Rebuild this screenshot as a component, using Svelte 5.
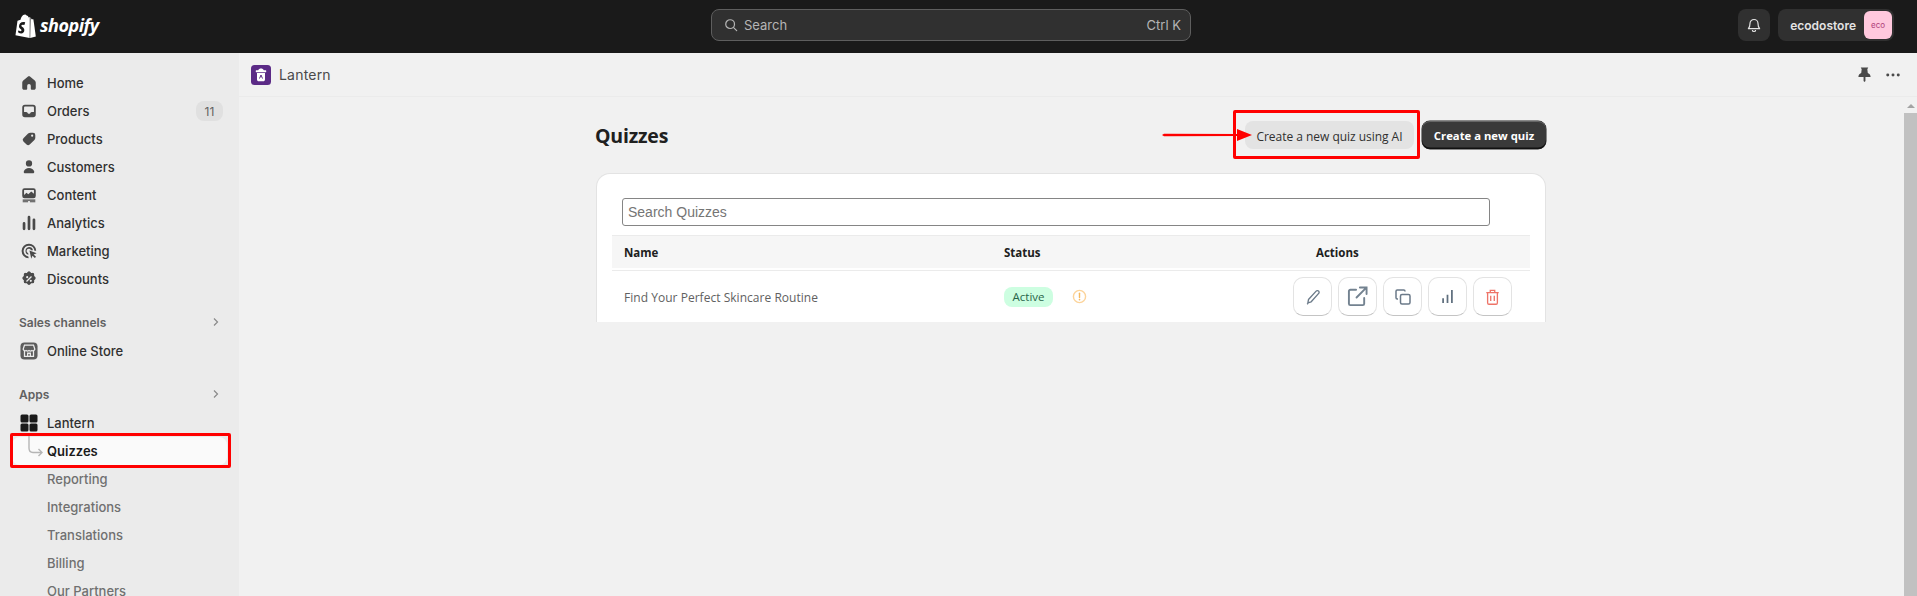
<script>
  const mainNav = [
    { label: 'Home', d: 'M10 2.5c-.5 0-1 .2-1.4.5L3.6 7.2c-.7.6-1.1 1.4-1.1 2.3v6c0 1.1.9 2 2 2h2.5c.6 0 1-.4 1-1V13a2 2 0 0 1 4 0v3.5c0 .6.4 1 1 1h2.5c1.1 0 2-.9 2-2v-6c0-.9-.4-1.7-1.1-2.3L11.4 3c-.4-.3-.9-.5-1.4-.5z' },
    { label: 'Orders', badge: '11', d: 'M5.5 3a3 3 0 0 0-3 3v8a3 3 0 0 0 3 3h9a3 3 0 0 0 3-3V6a3 3 0 0 0-3-3h-9zm0 2h9c.6 0 1 .4 1 1v5h-2.300c-.7 0-1.300.4-1.600 1l-.2.4c-.1.3-.4.6-.8.6H9.400c-.4 0-.7-.3-.8-.6l-.2-.4c-.3-.6-.9-1-1.600-1H4.500V6c0-.6.4-1 1-1z' },
    { label: 'Products', d: 'M11.5 3h3A2.5 2.5 0 0 1 17 5.5v3c0 .9-.4 1.8-1 2.5l-5.2 5.2a2.5 2.5 0 0 1-3.5 0l-3.5-3.5a2.5 2.5 0 0 1 0-3.5L9 4c.7-.6 1.6-1 2.5-1zm2 4.5a1.2 1.2 0 1 0 0-2.4 1.2 1.2 0 0 0 0 2.4z' },
    { label: 'Customers', d: 'M10 2.5a3.5 3.5 0 1 1 0 7 3.5 3.5 0 0 1 0-7zM4.200 15c.8-2.4 3-3.8 5.8-3.8s5 1.400 5.800 3.800c.3 1-.4 2-1.500 2H5.700c-1.100 0-1.800-1-1.500-2z' },
    { label: 'Content', d: 'M5 2.5h10A2.5 2.5 0 0 1 17.5 5v6a2.5 2.5 0 0 1-2.5 2.5H5A2.5 2.5 0 0 1 2.5 11V5A2.5 2.5 0 0 1 5 2.5zm0 2c-.3 0-.5.2-.5.5v5l2.7-2.5 2 1.800 3.300-3.300 3 2.500V5c0-.3-.2-.5-.5-.5H5zM3 15h14v1.500H3zM3 17h6v1H3zm8 0h6v1h-6z' },
    { label: 'Analytics', d: 'M8.5 3.5a1.5 1.5 0 0 1 3 0v13a1.5 1.5 0 0 1-3 0zM14 6.5a1.5 1.5 0 0 1 3 0v10a1.5 1.5 0 0 1-3 0zM3 10.5a1.5 1.5 0 0 1 3 0v6a1.5 1.5 0 0 1-3 0z' },
    { label: 'Marketing', d: 'M10 2a8 8 0 0 1 8 7.7h-2A6 6 0 1 0 9.3 16l.3 2A8 8 0 0 1 10 2zm0 3.5a4.5 4.5 0 0 1 4.4 3.600h-2.200A2.500 2.500 0 1 0 9 12.300l.4 2A4.500 4.500 0 0 1 10 5.500zM10.500 9.500l8 3-3.300 1.300 2.600 2.700-1.300 1.300-2.700-2.600-1.300 3.300z' },
    { label: 'Discounts', d: 'M8.5 2.3a2 2 0 0 1 3 0l.9 1 1.3-.1a2 2 0 0 1 2.1 2.1l-.1 1.300 1 .9a2 2 0 0 1 0 3l-1 .9.1 1.300a2 2 0 0 1-2.100 2.100l-1.300-.1-.9 1a2 2 0 0 1-3 0l-.9-1-1.300.1a2 2 0 0 1-2.100-2.100l.1-1.300-1-.9a2 2 0 0 1 0-3l1-.9-.1-1.300a2 2 0 0 1 2.100-2.100l1.300.1zM12.300 6.700l-5.600 5.600 1 1 5.600-5.600zM8 6.800a1.200 1.200 0 1 0 0 2.400 1.200 1.200 0 0 0 0-2.400zm4 4a1.200 1.200 0 1 0 0 2.400 1.200 1.200 0 0 0 0-2.400z' }
  ];
  const subNav = ['Reporting', 'Integrations', 'Translations', 'Billing', 'Our Partners'];
</script>

<div class="page">
  <header class="topbar">
    <div class="brand">
      <svg class="bag" viewBox="0 0 22 25" width="21" height="24" aria-hidden="true">
        <path fill="#fff" d="M15.5 3.2 14.3 3.6C13.9 2.5 13.3 1.6 12.2 1.6 11.7.8 11.1.5 10.5.5 7.6.5 6.2 4.100 5.800 6L3.400 6.700C2.700 6.900 2.600 7 2.500 7.700L.5 22.200 15.400 25z"/>
        <path fill="#fff" d="M16.300 3.200 15.900 25l6-1.400S19.400 6 19.300 5.800c0-.2-.2-.3-.4-.3l-1.600-.1z"/>
        <path fill="#1a1a1a" d="M10.600 9.200 9.800 11.500s-.8-.4-1.700-.4c-1.400 0-1.400.9-1.400 1.100 0 1.200 3.100 1.700 3.100 4.500 0 2.200-1.400 3.600-3.300 3.600-2.300 0-3.400-1.400-3.400-1.400l.6-2s1.200 1 2.200 1c.7 0 .9-.5.9-.9 0-1.600-2.600-1.700-2.600-4.300 0-2.200 1.600-4.400 4.800-4.400 1.200 0 1.600.4 1.600.4z"/>
      </svg>
      <span class="wordmark">shopify</span>
    </div>
    <div class="search">
      <svg viewBox="0 0 16 16" width="14" height="14" aria-hidden="true"><circle cx="7" cy="7" r="5" fill="none" stroke="#b5b5b5" stroke-width="1.4"/><path d="m11 11 3.5 3.5" stroke="#b5b5b5" stroke-width="1.4" stroke-linecap="round"/></svg>
      <span class="search-label">Search</span>
      <span class="shortcut">Ctrl K</span>
    </div>
    <div class="account">
      <button class="bell" aria-label="Notifications">
        <svg viewBox="0 0 20 20" width="16" height="17" aria-hidden="true"><path fill="none" stroke="#e3e3e3" stroke-width="1.5" stroke-linejoin="round" d="M10 2.5a5 5 0 0 0-5 5c0 3.5-.8 5-2 6.500h14c-1.200-1.500-2-3-2-6.500a5 5 0 0 0-5-5z"/><path fill="none" stroke="#e3e3e3" stroke-width="1.5" d="M8 15.500a2 2 0 0 0 4 0"/></svg>
      </button>
      <div class="store">
        <span>ecodostore</span>
        <span class="avatar">eco</span>
      </div>
    </div>
  </header>

  <div class="body">
    <nav class="sidebar">
      <ul>
        {#each mainNav as item}
          <li class="row">
            <svg class="icon" viewBox="0 0 20 20" width="18" height="18" aria-hidden="true"><path fill="#4a4a4a" fill-rule="evenodd" d={item.d}/></svg>
            <span class="label">{item.label}</span>
            {#if item.badge}<span class="count">{item.badge}</span>{/if}
          </li>
        {/each}
      </ul>

      <div class="section">
        <span>Sales channels</span>
        <svg viewBox="0 0 10 10" width="10" height="10" aria-hidden="true"><path d="m3 1.5 3.5 3.5L3 8.5" fill="none" stroke="#8a8a8a" stroke-width="1.2"/></svg>
      </div>
      <div class="row">
        <svg class="icon" viewBox="0 0 20 20" width="18" height="18" aria-hidden="true">
          <rect x="0.5" y="0.5" width="19" height="19" rx="4.5" fill="#5c5c5c"/>
          <path fill="none" stroke="#ebebeb" stroke-width="1.4" d="M5 3.5h10l1.500 4.500a2.200 2.200 0 0 1-3.200 1.500 2.700 2.700 0 0 1-3.300 0 2.700 2.700 0 0 1-3.300 0A2.200 2.200 0 0 1 3.500 8zM5 10v6h10v-6M8.500 16v-3.500h3V16"/>
        </svg>
        <span class="label">Online Store</span>
      </div>

      <div class="section">
        <span>Apps</span>
        <svg viewBox="0 0 10 10" width="10" height="10" aria-hidden="true"><path d="m3 1.5 3.5 3.5L3 8.5" fill="none" stroke="#8a8a8a" stroke-width="1.2"/></svg>
      </div>
      <div class="row">
        <svg class="icon" viewBox="0 0 18 18" width="18" height="18" aria-hidden="true">
          <rect x="0.5" y="0.5" width="8" height="8" rx="1.5" fill="#1a1a1a"/>
          <rect x="9.5" y="0.5" width="8" height="8" rx="1.5" fill="#1a1a1a"/>
          <rect x="0.5" y="9.5" width="8" height="8" rx="1.5" fill="#1a1a1a"/>
          <rect x="9.5" y="9.5" width="8" height="8" rx="1.5" fill="#1a1a1a"/>
        </svg>
        <span class="label">Lantern</span>
      </div>
      <div class="row sub current">
        <svg class="elbow" viewBox="0 0 16 26" width="16" height="26" aria-hidden="true"><path d="M1 0v14c0 3 1.5 4.5 4 4.5h9M10.5 15l3.5 3.500-3.500 3.500" fill="none" stroke="#b5b5b5" stroke-width="1.4"/></svg>
        <span class="label">Quizzes</span>
      </div>
      {#each subNav as item}
        <div class="row sub"><span class="label">{item}</span></div>
      {/each}
      <div class="mark nav-mark"></div>
    </nav>

    <main class="content">
      <div class="appbar">
        <svg class="app-logo" viewBox="0 0 20 20" width="20" height="20" aria-hidden="true">
          <rect width="20" height="20" rx="3.5" fill="#5b2a86"/>
          <path fill="#fff" d="M10 3.5c1.3 0 2.3.7 2.8 1.700h1.700c.5 0 .8.5.8 1s-.3 1-.8 1h-9c-.5 0-.8-.5-.8-1s.3-1 .8-1h1.700C7.700 4.200 8.700 3.500 10 3.500zM6 8h8v6.500c0 1-.8 1.800-1.800 1.800H7.800c-1 0-1.800-.8-1.800-1.800z"/>
          <path fill="none" stroke="#5b2a86" stroke-width="1" d="M8.500 13.500 10 10l1.500 3.500"/>
        </svg>
        <span class="app-name">Lantern</span>
        <div class="app-tools">
          <svg viewBox="0 0 16 16" width="15" height="15" aria-hidden="true"><path fill="#4a4a4a" d="M4 .5h8l-1 2 .5 4c2 .8 3 2.300 3 4.200H9V15l-1 1-1-1v-4.300H1.500c0-1.900 1-3.400 3-4.200l.5-4z"/></svg>
          <svg viewBox="0 0 16 4" width="14" height="4" aria-hidden="true"><circle cx="2" cy="2" r="1.7" fill="#4a4a4a"/><circle cx="8" cy="2" r="1.7" fill="#4a4a4a"/><circle cx="14" cy="2" r="1.7" fill="#4a4a4a"/></svg>
        </div>
      </div>

      <div class="scroller">
        <div class="wrap">
          <div class="head">
            <h1>Quizzes</h1>
            <div class="head-actions">
              <button class="btn plain">Create a new quiz using AI</button>
              <button class="btn dark">Create a new quiz</button>
            </div>
          </div>

          <section class="card">
            <input class="filter" placeholder="Search Quizzes" />
            <div class="grid thead">
              <div>Name</div>
              <div>Status</div>
              <div class="actions-title">Actions</div>
            </div>
            <div class="grid tbody">
              <div class="quiz-name">Find Your Perfect Skincare Routine</div>
              <div class="status">
                <span class="pill">Active</span>
                <svg viewBox="0 0 16 16" width="15" height="15" aria-hidden="true"><circle cx="8" cy="8" r="6.5" fill="none" stroke="#fcd49b" stroke-width="1.5"/><path d="M8 4.500V9" stroke="#f5b95f" stroke-width="1.5" stroke-linecap="round"/><circle cx="8" cy="11.3" r=".9" fill="#f5b95f"/></svg>
              </div>
              <div class="tools">
                <button class="tool" aria-label="Edit">
                  <svg viewBox="0 0 20 20" width="18" height="18" aria-hidden="true"><path fill="none" stroke="#6b7a89" stroke-width="1.5" stroke-linejoin="round" d="M13.5 3.5a1.800 1.800 0 0 1 2.800 2.500L8 15.300 4.300 16.500 5 12.800zM3.500 18l1-1"/></svg>
                </button>
                <button class="tool" aria-label="Open">
                  <svg viewBox="0 0 22 22" width="21" height="21" aria-hidden="true"><path fill="none" stroke="#738290" stroke-width="2" stroke-linecap="round" d="M9.5 4h-6A1.5 1.5 0 0 0 2 5.500v13A1.500 1.500 0 0 0 3.500 20h13a1.500 1.500 0 0 0 1.500-1.500v-6M10 12 20 2M13.500 1.500h7v7"/></svg>
                </button>
                <button class="tool" aria-label="Duplicate">
                  <svg viewBox="0 0 16 16" width="16" height="16" aria-hidden="true"><rect x="5.5" y="5.5" width="9.5" height="9.5" rx="1.5" fill="none" stroke="#6b7a89" stroke-width="1.5"/><path fill="none" stroke="#6b7a89" stroke-width="1.5" d="M10 2.500v-.3A1.200 1.200 0 0 0 8.800 1H2.200A1.200 1.200 0 0 0 1 2.200v6.600A1.200 1.200 0 0 0 2.200 10H3"/></svg>
                </button>
                <button class="tool" aria-label="Reports">
                  <svg viewBox="0 0 12 14" width="11" height="13" aria-hidden="true"><path d="M1.2 14V9M6 14V5M10.8 14V0" stroke="#5f6f7e" stroke-width="1.9"/></svg>
                </button>
                <button class="tool" aria-label="Delete">
                  <svg viewBox="0 0 16 18" width="15" height="16" aria-hidden="true"><path fill="none" stroke="#ee7468" stroke-width="1.5" d="M1 4h14M5.500 4V1.500h5V4M2.500 4v11.500c0 1 .7 1.700 1.500 1.700h8c.8 0 1.500-.7 1.500-1.700V4M6 7.500v6M10 7.500v6"/></svg>
                </button>
              </div>
            </div>
          </section>
        </div>
        <div class="scrollbar">
          <span class="up"></span>
          <span class="thumb"></span>
        </div>
      </div>

      <div class="mark ai-mark"></div>
      <svg class="pointer" viewBox="0 0 90 14" width="90" height="14" aria-hidden="true"><path d="M0 7 2 5.800 78 6v2L2 8.200z" fill="#f00"/><path d="M75 1l15 6-15 6z" fill="#f00"/></svg>
    </main>
  </div>
</div>

<style>
  :global(body) {
    background: #f1f1f1;
    overflow: hidden;
  }
  .page {
    height: 596px;
    display: flex;
    flex-direction: column;
    overflow: hidden;
    font-family: Inter, "Noto Sans", sans-serif;
    font-size: 13px;
    color: #303030;
  }
  button {
    font: inherit;
    cursor: pointer;
  }

  .topbar {
    flex: none;
    height: 53px;
    box-sizing: border-box;
    padding-bottom: 3px;
    background: #1a1a1a;
    display: grid;
    grid-template-columns: 711px 480px 1fr;
    align-items: center;
  }
  .brand {
    display: flex;
    align-items: center;
    gap: 4px;
    padding-left: 15px;
  }
  .bag {
    position: relative;
    top: 1px;
  }
  .wordmark {
    font-family: "Open Sans", sans-serif;
    font-style: italic;
    font-weight: 700;
    font-size: 18px;
    letter-spacing: -0.5px;
    color: #fff;
  }
  .search {
    height: 32px;
    box-sizing: border-box;
    border: 1px solid #5e5e5e;
    border-radius: 8px;
    background: #303030;
    display: flex;
    align-items: center;
    padding: 0 9px 0 12px;
    color: #b5b5b5;
  }
  .search-label {
    margin-left: 6px;
  }
  .shortcut {
    margin-left: auto;
  }
  .account {
    display: flex;
    justify-content: flex-end;
    align-items: center;
    gap: 8px;
    padding-right: 23px;
  }
  .bell {
    width: 32px;
    height: 32px;
    border: none;
    border-radius: 8px;
    background: #303030;
    display: flex;
    align-items: center;
    justify-content: center;
    padding: 0;
  }
  .store {
    height: 32px;
    border-radius: 8px;
    background: #303030;
    color: #e3e3e3;
    font-weight: 600;
    font-size: 12px;
    display: flex;
    align-items: center;
    gap: 8px;
    padding: 0 2px 0 12px;
  }
  .avatar {
    width: 28px;
    height: 28px;
    border-radius: 6px;
    background: #ffc8dd;
    color: #b0417a;
    font-size: 8px;
    font-weight: 400;
    display: flex;
    align-items: center;
    justify-content: center;
  }

  .body {
    flex: 1;
    min-height: 0;
    display: flex;
  }
  .sidebar {
    flex: none;
    width: 239px;
    box-sizing: border-box;
    background: #ebebeb;
    padding: 16px 0 0 12px;
    position: relative;
  }
  ul {
    list-style: none;
    margin: 0;
    padding: 0;
  }
  .row {
    height: 28px;
    width: 215px;
    box-sizing: border-box;
    display: flex;
    align-items: center;
    padding: 0 11px 0 8px;
    border-radius: 8px;
    position: relative;
  }
  .icon {
    flex: none;
    margin-right: 9px;
  }
  .label {
    font-weight: 500;
  }
  .count {
    margin-left: auto;
    margin-right: -7px;
    width: 27px;
    height: 20px;
    border-radius: 8px;
    background: #e0e0e0;
    color: #616161;
    font-size: 12px;
    display: flex;
    align-items: center;
    justify-content: center;
  }
  .section {
    height: 30px;
    width: 215px;
    margin-top: 14px;
    box-sizing: border-box;
    display: flex;
    align-items: center;
    justify-content: space-between;
    padding: 0 6px 0 7px;
    color: #616161;
    font-size: 12px;
    font-weight: 600;
  }
  .sub {
    padding-left: 35px;
    color: #707070;
  }
  .sub .label {
    font-weight: 450;
  }
  .current {
    background: #fafafa;
    color: #1a1a1a;
  }
  .current .label {
    font-weight: 600;
  }
  .elbow {
    position: absolute;
    left: 16px;
    top: -3px;
  }

  .content {
    flex: 1;
    min-width: 0;
    display: flex;
    flex-direction: column;
    position: relative;
  }
  .appbar {
    flex: none;
    height: 44px;
    box-sizing: border-box;
    border-bottom: 1px solid #ebebeb;
    display: flex;
    align-items: center;
    padding: 0 17px 0 12px;
  }
  .app-logo {
    margin-right: 8px;
  }
  .app-name {
    font-size: 14px;
    letter-spacing: 0.2px;
    color: #4a4a4a;
  }
  .app-tools {
    margin-left: auto;
    display: flex;
    align-items: center;
    gap: 14px;
  }
  .scroller {
    flex: 1;
    min-height: 0;
    display: flex;
  }
  .wrap {
    flex: 1;
    min-width: 0;
    box-sizing: border-box;
    padding-right: 1px;
    display: flex;
    flex-direction: column;
    align-items: center;
    font-family: "Open Sans", sans-serif;
  }
  .head {
    width: 950px;
    height: 76px;
    flex: none;
    box-sizing: border-box;
    display: flex;
    align-items: center;
    justify-content: space-between;
  }
  h1 {
    margin: 0 0 0 -1px;
    font-size: 19.5px;
    font-weight: 700;
    letter-spacing: -0.2px;
    color: #202020;
  }
  .head-actions {
    display: flex;
    gap: 8px;
  }
  .btn {
    height: 28px;
    border-radius: 8px;
    border: none;
    font-size: 12px;
    white-space: nowrap;
  }
  .plain {
    width: 169px;
    background: #e3e3e3;
    color: #303030;
    padding: 2px 0 0;
    letter-spacing: -0.03px;
  }
  .dark {
    width: 124px;
    background: #3a3a3a;
    color: #fff;
    font-weight: 700;
    font-size: 11.3px;
    padding: 1px 0 0;
    box-shadow: inset 0 -1.5px 0 #111, inset 0 1px 0 #666, 0 0 0 .5px #222;
  }
  .card {
    width: 950px;
    flex: none;
    height: 149px;
    box-sizing: border-box;
    background: #fff;
    border: 1px solid #e3e3e3;
    border-bottom: none;
    border-radius: 14px 14px 0 0;
    padding: 24px 15px 0;
  }
  .filter {
    display: block;
    width: 868px;
    height: 28px;
    box-sizing: border-box;
    margin-left: 10px;
    padding: 0 5px;
    border: 1px solid #858585;
    border-radius: 3px;
    font-family: "Liberation Sans", sans-serif;
    font-size: 14px;
    color: #303030;
  }
  .filter::placeholder {
    color: #757575;
  }
  .grid {
    display: grid;
    grid-template-columns: 380px 291px 1fr;
    align-items: center;
  }
  .thead {
    margin-top: 9px;
    height: 33px;
    box-sizing: border-box;
    border-top: 1px solid #ebebeb;
    background: #f6f6f6;
    font-size: 11.5px;
    font-weight: 700;
    color: #202020;
  }
  .thead > div {
    padding-left: 12px;
  }
  .thead .actions-title {
    padding-left: 33px;
  }
  .tbody {
    height: 52px;
    box-sizing: border-box;
    margin-top: 2px;
    border-top: 1px solid #ebebeb;
    font-size: 12px;
    letter-spacing: 0.03px;
    color: #616161;
  }
  .quiz-name {
    padding: 2px 0 0 12px;
  }
  .status {
    padding-left: 12px;
    display: flex;
    align-items: center;
    gap: 19px;
  }
  .pill {
    width: 49px;
    height: 20px;
    border-radius: 8px;
    background: #cdfee1;
    color: #29654a;
    font-size: 11.5px;
    display: flex;
    align-items: center;
    justify-content: center;
  }
  .tools {
    display: flex;
    gap: 6px;
    padding-left: 10px;
  }
  .tool {
    width: 39px;
    height: 39px;
    padding: 0;
    background: #fff;
    border: 1px solid #e3e3e3;
    border-bottom-color: #c4c4c4;
    border-radius: 10px;
    display: flex;
    align-items: center;
    justify-content: center;
  }
  .scrollbar {
    flex: none;
    width: 13px;
    background: #f1f1f1;
    display: flex;
    flex-direction: column;
    align-items: center;
  }
  .up {
    margin-top: 7px;
    border-left: 4px solid transparent;
    border-right: 4px solid transparent;
    border-bottom: 4px solid #a3a3a3;
  }
  .thumb {
    margin-top: 5px;
    flex: 1;
    width: 100%;
    background: #c1c1c1;
  }

  /* annotations drawn over the screenshot */
  .mark {
    position: absolute;
    box-sizing: border-box;
    border: 3px solid #f00;
    border-radius: 2px;
    pointer-events: none;
  }
  .nav-mark {
    left: 10px;
    top: 380px;
    width: 221px;
    height: 35px;
  }
  .ai-mark {
    left: 994px;
    top: 57px;
    width: 187px;
    height: 49px;
  }
  .pointer {
    position: absolute;
    left: 923px;
    top: 75px;
  }
</style>
